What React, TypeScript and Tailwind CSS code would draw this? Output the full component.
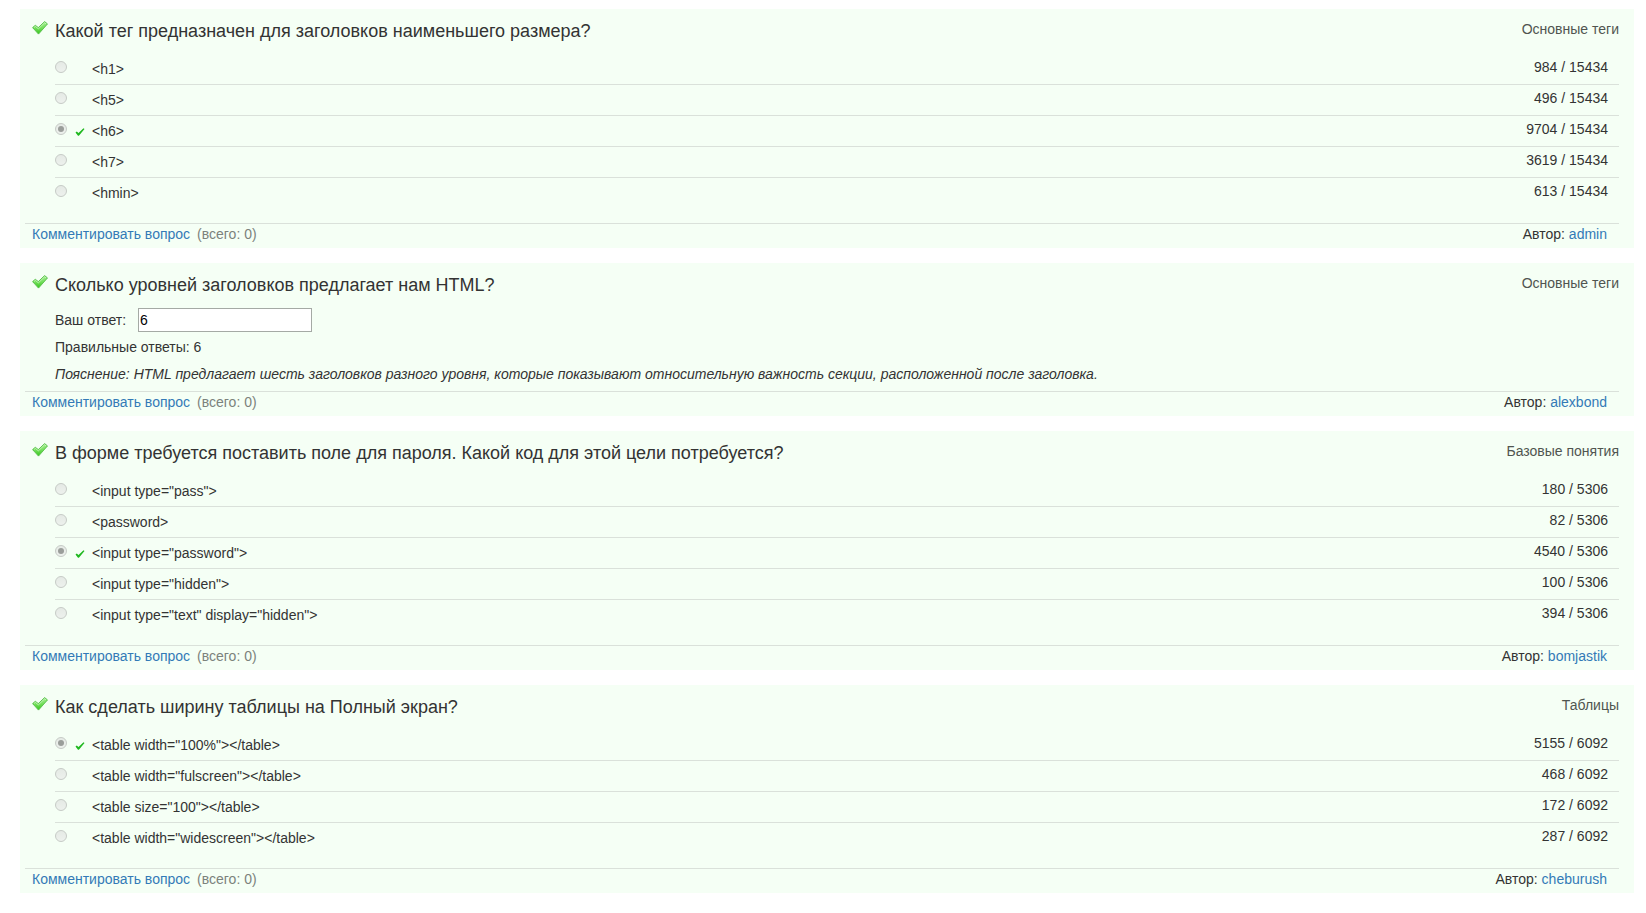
import { useId } from "react";

type Option = { text: string; votes: number; correct?: boolean };

type Question = {
  title: string;
  category: string;
  author: string;
  total?: number;
  options?: Option[];
  answer?: string;
  explanation?: string;
};

const questions: Question[] = [
  {
    title: "Какой тег предназначен для заголовков наименьшего размера?",
    category: "Основные теги",
    author: "admin",
    total: 15434,
    options: [
      { text: "<h1>", votes: 984 },
      { text: "<h5>", votes: 496 },
      { text: "<h6>", votes: 9704, correct: true },
      { text: "<h7>", votes: 3619 },
      { text: "<hmin>", votes: 613 },
    ],
  },
  {
    title: "Сколько уровней заголовков предлагает нам HTML?",
    category: "Основные теги",
    author: "alexbond",
    answer: "6",
    explanation:
      "Пояснение: HTML предлагает шесть заголовков разного уровня, которые показывают относительную важность секции, расположенной после заголовка.",
  },
  {
    title: "В форме требуется поставить поле для пароля. Какой код для этой цели потребуется?",
    category: "Базовые понятия",
    author: "bomjastik",
    total: 5306,
    options: [
      { text: '<input type="pass">', votes: 180 },
      { text: "<password>", votes: 82 },
      { text: '<input type="password">', votes: 4540, correct: true },
      { text: '<input type="hidden">', votes: 100 },
      { text: '<input type="text" display="hidden">', votes: 394 },
    ],
  },
  {
    title: "Как сделать ширину таблицы на Полный экран?",
    category: "Таблицы",
    author: "cheburush",
    total: 6092,
    options: [
      { text: '<table width="100%"></table>', votes: 5155, correct: true },
      { text: '<table width="fulscreen"></table>', votes: 468 },
      { text: '<table size="100"></table>', votes: 172 },
      { text: '<table width="widescreen"></table>', votes: 287 },
    ],
  },
];

function BigCheck() {
  const id = useId();
  return (
    <svg viewBox="0 0 16 14" className="h-[14px] w-4 shrink-0" aria-hidden="true">
      <defs>
        <linearGradient id={id} x1="0" y1="0" x2="0" y2="1">
          <stop offset="0" stopColor="#a5ec94" />
          <stop offset="0.5" stopColor="#74e05c" />
          <stop offset="1" stopColor="#35c41c" />
        </linearGradient>
      </defs>
      <path
        d="M0.6 6.6 L3.3 4.3 L6.3 6.6 L12.6 0.6 L15.5 2.9 L6.5 13.1 Z"
        fill={`url(#${id})`}
        stroke="#55bd47"
        strokeWidth="0.9"
        strokeLinejoin="round"
      />
      <path d="M2 6.5 L3.4 5.4 L6.4 7.8 L12.7 1.8 L14 2.9" fill="none" stroke="#c9f7bd" strokeWidth="0.8" />
    </svg>
  );
}

function SmallCheck() {
  return (
    <svg viewBox="0 0 10 8" className="h-2 w-[10px]" role="img" aria-label="Верно">
      <path d="M0.5 4.4 L1.8 3.4 L3.5 5 L8.5 0.3 L9.5 1 L3.9 7.8 L3 7.8 Z" fill="#1fb81f" />
    </svg>
  );
}

function OptionList({ options, total, name }: { options: Option[]; total: number; name: string }) {
  return (
    <ul className="mr-[15px] mb-[15px] ml-[35px] divide-y divide-[#dae1da]">
      {options.map((o, i) => (
        <li key={o.text} className="box-content flex h-[30px] items-start">
          <input
            id={`${name}-${i}`}
            type="radio"
            name={name}
            disabled
            defaultChecked={o.correct}
            className="mt-[7px] grid size-3 shrink-0 appearance-none place-items-center rounded-full border border-[#c6cbc6] bg-linear-to-b from-[#e5eae5] to-[#edf1ed] before:size-[6px] before:rounded-full checked:before:bg-[#9a9e9a]"
          />
          <span className="flex w-[25px] shrink-0 justify-center pt-3">{o.correct && <SmallCheck />}</span>
          <label htmlFor={`${name}-${i}`} className="grow pt-[5px]">
            {o.text}
          </label>
          <span className="pt-[3px] pr-[11px]">
            {o.votes} / {total}
          </span>
        </li>
      ))}
    </ul>
  );
}

function QuestionCard({ q }: { q: Question }) {
  const id = useId();
  return (
    <article className="bg-[#f5fff5]">
      <header className="flex h-[45px] items-start pr-[15px] pl-3">
        <div className="w-[23px] shrink-0 pt-3">
          <BigCheck />
        </div>
        <h2 className="grow pt-[10px] text-lg leading-6">{q.title}</h2>
        <span className="pt-[10px] text-[#505550]">{q.category}</span>
      </header>
      {q.options && <OptionList options={q.options} total={q.total ?? 0} name={id} />}
      {q.answer && (
        <div className="mr-[15px] mb-[7px] ml-[35px]">
          <div className="flex h-6 items-center">
            <label htmlFor={id}>Ваш ответ:</label>
            <input
              id={id}
              type="text"
              defaultValue={q.answer}
              readOnly
              className="ml-3 h-6 w-[174px] border border-[#a5aaa5] bg-white px-px text-black"
            />
          </div>
          <p className="mt-[5px]">Правильные ответы: {q.answer}</p>
          <p className="mt-[7px] italic">{q.explanation}</p>
        </div>
      )}
      <footer className="mr-[15px] ml-[5px] flex justify-between border-t border-[#dae1da] pr-3 pb-1 pl-[7px]">
        <div>
          <a href="#comments" className="text-[#337ab7]">
            Комментировать вопрос
          </a>
          <span className="ml-[7px] text-[#7c827c]">(всего: 0)</span>
        </div>
        <div>
          Автор:{" "}
          <a href={`#${q.author}`} className="text-[#337ab7]">
            {q.author}
          </a>
        </div>
      </footer>
    </article>
  );
}

export default function App() {
  return (
    <main className="flex flex-col gap-[15px] bg-white pt-[9px] pr-3 pb-5 pl-5 font-['Liberation_Sans',Arial,sans-serif] text-sm leading-5 text-[#333]">
      {questions.map((q) => (
        <QuestionCard key={q.title} q={q} />
      ))}
    </main>
  );
}
